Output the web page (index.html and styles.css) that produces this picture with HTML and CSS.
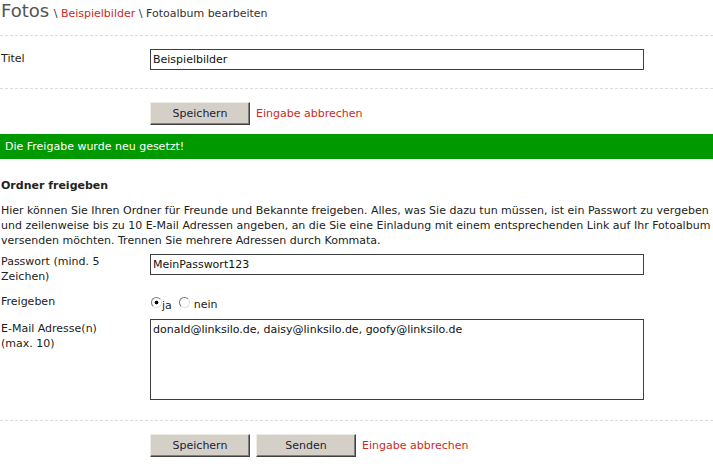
FILE: index.html
```html
<!DOCTYPE html>
<html lang="de">
<head>
    <meta charset="UTF-8">
    <title>Fotoalbum bearbeiten</title>
    <link rel="stylesheet" href="styles.css">
</head>
<body>

<div class="kopf">
    <span class="titel">Fotos</span>
    <span class="pfad"><span class="trenner">\</span> <a href="#">Beispielbilder</a> <span class="trenner">\</span> Fotoalbum bearbeiten</span>
</div>

<form class="formular">
    <div class="zeile zeile-titel">
        <label>Titel</label>
        <input type="text" class="eingabe" value="Beispielbilder">
    </div>
    <div class="aktionen">
        <button type="button" class="knopf">Speichern</button>
        <a href="#" class="abbrechen">Eingabe abbrechen</a>
    </div>
</form>

<div class="meldung">Die Freigabe wurde neu gesetzt!</div>

<form class="formular">
    <h2>Ordner freigeben</h2>
    <p class="hinweis">Hier können Sie Ihren Ordner für Freunde und Bekannte freigeben. Alles, was Sie dazu tun müssen, ist ein Passwort zu vergeben und zeilenweise bis zu 10 E-Mail Adressen angeben, an die Sie eine Einladung mit einem entsprechenden Link auf Ihr Fotoalbum versenden möchten. Trennen Sie mehrere Adressen durch Kommata.</p>

    <div class="felder">
        <div class="zeile">
            <label>Passwort (mind. 5 Zeichen)</label>
            <input type="text" class="eingabe" value="MeinPasswort123">
        </div>
        <div class="zeile">
            <label>Freigeben</label>
            <div class="auswahl">
                <input type="radio" name="frei" checked><span class="ja">ja</span>
                <input type="radio" name="frei"> nein
            </div>
        </div>
        <div class="zeile zeile-mail">
            <label>E-Mail Adresse(n) (max. 10)</label>
            <textarea class="eingabe textfeld">donald@linksilo.de, daisy@linksilo.de, goofy@linksilo.de</textarea>
        </div>
    </div>

    <div class="aktionen">
        <button type="button" class="knopf">Speichern</button>
        <button type="button" class="knopf">Senden</button>
        <a href="#" class="abbrechen">Eingabe abbrechen</a>
    </div>
</form>

</body>
</html>
```

FILE: styles.css
```css
body {
    margin: 0;
    background-color: #fff;
    color: #222;
    font-family: 'DejaVu Sans', Verdana, sans-serif;
    font-size: 11px;
    line-height: 15px;
}
a {
    color: #cc2a22;
    text-decoration: none;
}
.kopf {
    height: 35px;
    padding-left: 1px;
    border-bottom: 1px dashed #dcdcdc;
    line-height: 22px;
}
.titel {
    font-size: 18px;
    color: #555;
}
.pfad {
    color: #333;
    margin-left: 1px;
}
.trenner {
    color: #2b3b48;
}
.zeile {
    display: grid;
    grid-template-columns: 150px 494px;
    align-items: start;
}
.zeile label {
    padding: 0 30px 0 1px;
}
.zeile-titel {
    padding: 13px 0 18px;
    border-bottom: 1px dashed #dcdcdc;
}
.zeile-titel label {
    padding-top: 2px;
}
.zeile-mail {
    margin-top: -4px;
}
.zeile-mail label {
    padding-top: 2px;
}
.eingabe {
    box-sizing: border-box;
    width: 494px;
    height: 21px;
    margin: 0;
    padding: 1px 2px;
    border: 1px solid #3b3f3f;
    font-family: inherit;
    font-size: 11px;
    color: #111;
    outline: none;
}
.textfeld {
    height: 81px;
    padding: 2px 2px;
    resize: none;
    line-height: 15px;
}
.aktionen {
    display: flex;
    align-items: center;
    gap: 6px;
    padding: 13px 0 9px 150px;
}
.knopf {
    width: 100px;
    height: 23px;
    margin: 0;
    padding: 0;
    background-color: #d4d0c8;
    border: 1px solid;
    border-color: #eeece6 #404040 #404040 #eeece6;
    box-shadow: inset -1px -1px 0 #808080;
    font-family: inherit;
    font-size: 11px;
    color: #1d1d33;
}
.meldung {
    height: 25px;
    line-height: 25px;
    padding-left: 5px;
    background-color: #009900;
    color: #fff;
}
h2 {
    margin: 19px 0 0 1px;
    font-size: 11px;
    line-height: 15px;
}
.hinweis {
    margin: 10px 0 0 1px;
    width: 710px;
}
.felder {
    display: flex;
    flex-direction: column;
    gap: 10px;
    padding: 6px 0 20px;
    border-bottom: 1px dashed #dcdcdc;
}
.auswahl {
    display: flex;
    align-items: center;
    padding-top: 1px;
}
.auswahl input {
    appearance: none;
    width: 11px;
    height: 11px;
    margin: 0 0 4px 1px;
    border: 1px solid;
    border-color: #7a7a7a #e2e2e2 #e2e2e2 #7a7a7a;
    border-radius: 50%;
    background-color: #fff;
}
.auswahl input:checked {
    background: radial-gradient(circle, #000 0 1.6px, #fff 2.2px);
}
.auswahl .ja {
    margin: 3px 6px 0 0;
}
.auswahl input + .ja + input {
    margin-right: 4px;
}
```
